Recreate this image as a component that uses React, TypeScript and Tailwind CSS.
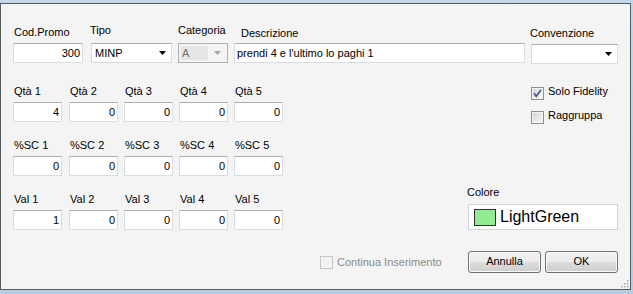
import React from 'react';

const TextBox = ({ value, className = '', align = 'right' }: { value: string; className?: string; align?: 'left' | 'right' }) => (
  <div
    className={`h-[20px] bg-white border border-[#d9dce1] border-t-[#abadb3] leading-[18px] text-black whitespace-nowrap overflow-hidden ${align === 'right' ? 'text-right pr-[2px]' : 'text-left pl-[2px]'} ${className}`}
  >
    {value}
  </div>
);

const Arrow = ({ color = '#000' }: { color?: string }) => (
  <svg width="7" height="4" viewBox="0 0 7 4" className="shrink-0">
    <path d="M0 0h7L3.5 4z" fill={color} />
  </svg>
);

const Combo = ({ value, className = '' }: { value: string; className?: string }) => (
  <div className={`h-[20px] bg-white border border-[#d9dce1] border-t-[#abadb3] flex items-center pl-[3px] pr-[5px] ${className}`}>
    <span className="flex-1 leading-[18px] text-black">{value}</span>
    <Arrow />
  </div>
);

const CheckBox = ({ checked = false, disabled = false }: { checked?: boolean; disabled?: boolean }) => (
  <svg width="13" height="13" viewBox="0 0 13 13" className="shrink-0">
    <defs>
      <linearGradient id={disabled ? 'cbd' : 'cbg'} x1="0" y1="0" x2="1" y2="1">
        <stop offset="0" stopColor={disabled ? '#f0f0f0' : '#d3d6da'} />
        <stop offset="1" stopColor={disabled ? '#f6f6f6' : '#f8f8f8'} />
      </linearGradient>
    </defs>
    <rect x="0.5" y="0.5" width="12" height="12" fill="#f4f4f4" stroke={disabled ? '#c6c6c6' : '#8e8f8f'} />
    <rect x="2" y="2" width="9" height="9" fill={`url(#${disabled ? 'cbd' : 'cbg'})`} />
    {checked && <path d="M3 6.3 5.2 9.2 10 3" fill="none" stroke="#4a5d8f" strokeWidth="1.8" />}
  </svg>
);

const Button = ({ label }: { label: string }) => (
  <button className="w-[73px] h-[22px] rounded-[3px] border border-[#707070] bg-[linear-gradient(#f2f2f2_0%,#ebebeb_50%,#dddddd_50%,#cfcfcf_100%)] shadow-[inset_0_0_0_1px_#fbfbfb] text-black leading-[18px] pb-[2px]">
    {label}
  </button>
);

const rows = [
  { name: 'Qtà', values: ['4', '0', '0', '0', '0'] },
  { name: '%SC', values: ['0', '0', '0', '0', '0'] },
  { name: 'Val', values: ['1', '0', '0', '0', '0'] },
];

export default function App() {
  return (
    <div className="w-[633px] h-[294px] bg-[linear-gradient(#c4d6ea,#b7cbe2)] pt-[3px] pr-[2px] pb-[4px] font-[family-name:Liberation_Sans,Arial,sans-serif] text-[11px]">
      <div className="relative h-[287px] border border-[#555a60] bg-[#f4f4f4] flex flex-col">
        {/* header row */}
        <div className="flex items-start pl-[12px] pt-[22px]">
          <div className="w-[70px] flex flex-col">
            <span className="h-[13px] leading-[13px] ml-[1px]">Cod.Promo</span>
            <TextBox value="300" className="mt-[4px]" />
          </div>
          <div className="w-[81px] ml-[8px] flex flex-col">
            <span className="h-[13px] leading-[13px] -mt-[2px] -ml-[1px]">Tipo</span>
            <Combo value="MINP" className="mt-[6px]" />
          </div>
          <div className="w-[50px] ml-[6px] flex flex-col">
            <span className="h-[13px] leading-[13px] -mt-[2px]">Categoria</span>
            <div className="mt-[6px] h-[20px] border border-[#adb2b5] bg-[#f4f4f4] flex items-center pl-[2px] pr-[6px]">
              <span className="w-[27px] h-[14px] bg-[#e6e6e6] leading-[14px] text-[#6d6d6d] pl-[1px]">A</span>
              <span className="flex-1" />
              <Arrow color="#a5a5a5" />
            </div>
          </div>
          <div className="w-[291px] ml-[6px] flex flex-col">
            <span className="h-[13px] leading-[13px] mt-[1px] ml-[7px]">Descrizione</span>
            <TextBox value="prendi 4 e l'ultimo lo paghi 1" align="left" className="mt-[3px]" />
          </div>
          <div className="w-[87px] ml-[6px] flex flex-col">
            <span className="h-[13px] leading-[13px] mt-[1px] -ml-[1px]">Convenzione</span>
            <Combo value="" className="mt-[4px]" />
          </div>
        </div>

        {/* body */}
        <div className="flex mt-[21px] pl-[12px]">
          <div className="grid grid-cols-[50px_49px_49px_49px_49px] gap-x-[6px] gap-y-[17px]">
            {rows.map((r) =>
              r.values.map((v, i) => (
                <div key={r.name + i} className="flex flex-col">
                  <span className="h-[13px] leading-[13px] ml-[1px] whitespace-nowrap">
                    {r.name} {i + 1}
                  </span>
                  <TextBox value={v} className="mt-[4px] w-[49px]" />
                </div>
              ))
            )}
          </div>
          <div className="ml-[184px] w-[151px] flex flex-col">
            <div className="ml-[64px] mt-[2px] flex items-start gap-[4px] h-[13px]">
              <CheckBox checked />
              <span className="leading-[13px] -mt-[2px]">Solo Fidelity</span>
            </div>
            <div className="ml-[64px] mt-[11px] flex items-start gap-[4px] h-[13px]">
              <CheckBox />
              <span className="leading-[13px] -mt-[2px]">Raggruppa</span>
            </div>
            <div className="mt-auto flex flex-col">
              <span className="h-[13px] leading-[13px]">Colore</span>
              <div className="mt-[5px] ml-[1px] w-[150px] h-[26px] bg-white border border-[#d2d4d8] flex items-center pl-[5px] gap-[4px]">
                <span className="w-[22px] h-[17px] bg-[#90ee90] border border-[#333]" />
                <span className="text-[16px] leading-[18px] text-black">LightGreen</span>
              </div>
            </div>
          </div>
        </div>

        {/* footer */}
        <div className="flex items-center mt-[21px] pl-[319px] pr-[12px]">
          <div className="flex items-center gap-[4px]">
            <CheckBox disabled />
            <span className="leading-[13px] text-[#8a8a8a]">Continua Inserimento</span>
          </div>
          <div className="ml-auto flex gap-[4px]">
            <Button label="Annulla" />
            <Button label="OK" />
          </div>
        </div>

        {/* size grip */}
        <svg width="10" height="10" viewBox="0 0 10 10" className="absolute right-[1px] bottom-[1px]">
          {[
            [8, 2], [8, 5], [8, 8], [5, 5], [5, 8], [2, 8],
          ].map(([x, y]) => (
            <rect key={`${x}-${y}`} x={x} y={y} width="1.5" height="1.5" fill="#a8a8a8" />
          ))}
        </svg>
      </div>
    </div>
  );
}
